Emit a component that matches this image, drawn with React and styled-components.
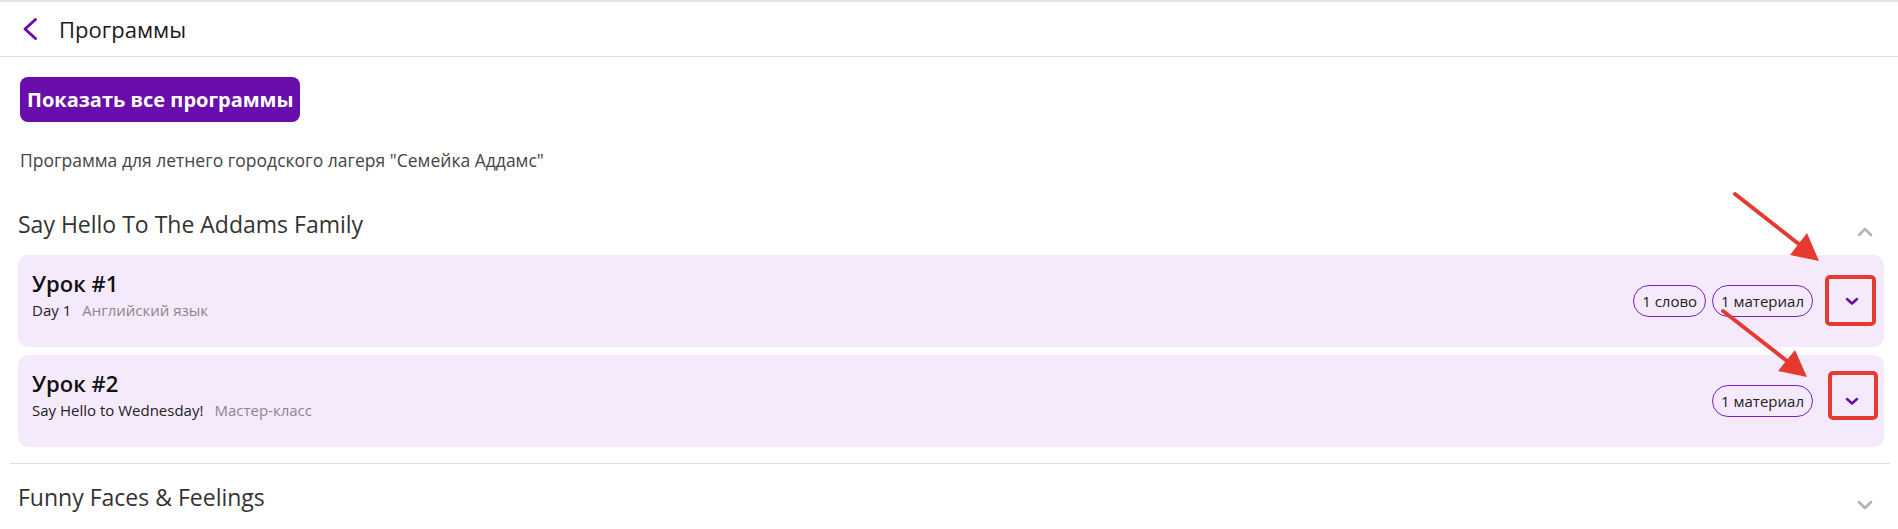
import React from 'react';
import styled, { createGlobalStyle } from 'styled-components';

const GlobalStyle = createGlobalStyle`
  html, body {
    margin: 0;
    padding: 0;
    background: #fff;
    font-family: "Open Sans", "Noto Sans", sans-serif;
  }
  * { box-sizing: border-box; }
`;

const lessonsA = [
  { title: 'Урок #1', name: 'Day 1', type: 'Английский язык', tags: ['1 слово', '1 материал'] },
  { title: 'Урок #2', name: 'Say Hello to Wednesday!', type: 'Мастер-класс', tags: ['1 материал'] },
];

function App() {
  return (
    <Page>
      <GlobalStyle />
      <Header>
        <BackIcon width="16" height="24" viewBox="0 0 16 24">
          <polyline points="13.5,2.5 3,12 13.5,21.5" />
        </BackIcon>
        <HeaderTitle>Программы</HeaderTitle>
      </Header>
      <Content>
        <ShowAllButton>Показать все программы</ShowAllButton>
        <Description>Программа для летнего городского лагеря "Семейка Аддамс"</Description>

        <Section>
          <SectionHead>
            <SectionTitle>Say Hello To The Addams Family</SectionTitle>
            <ToggleIcon width="16" height="10" viewBox="0 0 16 10">
              <polyline points="2,8 8,2 14,8" />
            </ToggleIcon>
          </SectionHead>
          <LessonList>
            {lessonsA.map((l) => (
              <LessonCard key={l.title}>
                <LessonInfo>
                  <LessonTitle>{l.title}</LessonTitle>
                  <Meta>
                    <MetaName>{l.name}</MetaName>
                    <MetaType>{l.type}</MetaType>
                  </Meta>
                </LessonInfo>
                <LessonSide>
                  {l.tags.map((t) => (
                    <Pill key={t}>{t}</Pill>
                  ))}
                  <ExpandButton>
                    <ExpandIcon width="14" height="9" viewBox="0 0 14 9">
                      <polyline points="2,2 7,6.5 12,2" />
                    </ExpandIcon>
                  </ExpandButton>
                </LessonSide>
              </LessonCard>
            ))}
          </LessonList>
        </Section>

        <Section>
          <SectionHead>
            <SectionTitle>Funny Faces &amp; Feelings</SectionTitle>
            <ToggleIcon width="16" height="10" viewBox="0 0 16 10">
              <polyline points="2,2 8,8 14,2" />
            </ToggleIcon>
          </SectionHead>
        </Section>
      </Content>

      <Annotations width="1898" height="529" viewBox="0 0 1898 529">
        <line x1="1735" y1="194" x2="1800" y2="245" />
        <polygon points="1819,261 1790,255 1807,233" />
        <line x1="1723" y1="311" x2="1787" y2="361" />
        <polygon points="1807,377 1778,371 1795,350" />
        <rect className="box" x="1827" y="277" width="47" height="47" rx="3" />
        <rect className="box" x="1830" y="373" width="46" height="45" rx="3" />
      </Annotations>
    </Page>
  );
}

const Page = styled.div`
  position: relative;
  width: 1898px;
  height: 529px;
  overflow: hidden;
`;

const Header = styled.header`
  display: flex;
  align-items: center;
  height: 57px;
  padding-left: 22px;
  border-top: 2px solid #e4e4e4;
  border-bottom: 1px solid #e7dbf2;
`;

const BackIcon = styled.svg`
  display: block;
  fill: none;
  stroke: #6a0dad;
  stroke-width: 3;
  stroke-linecap: round;
  stroke-linejoin: round;
`;

const HeaderTitle = styled.h1`
  margin: 0 0 0 21px;
  font-size: 22px;
  font-weight: 500;
  line-height: 28px;
  color: #1a1a1a;
`;

const Content = styled.main`
  padding: 20px 8px 0 10px;
`;

const ShowAllButton = styled.button`
  display: block;
  margin-left: 10px;
  padding: 9px 7px;
  border: none;
  border-radius: 8px;
  background: #6a0dad;
  color: #fff;
  font-family: inherit;
  font-size: 20px;
  font-weight: 700;
  line-height: 27px;
`;

const Description = styled.p`
  margin: 26px 0 19px 10px;
  font-size: 17.5px;
  line-height: 24px;
  color: #444;
`;

const Section = styled.section`
  padding: 17px 6px 16px 8px;
  border-bottom: 1px solid #e7dbf2;

  &:last-child {
    border-bottom: none;
  }
`;

const SectionHead = styled.div`
  display: flex;
  justify-content: space-between;
  align-items: flex-end;
`;

const SectionTitle = styled.h2`
  margin: 0;
  font-size: 23px;
  font-weight: 400;
  line-height: 32px;
  color: #333;
`;

const ToggleIcon = styled.svg`
  display: block;
  margin: 0 11px 3px 0;
  fill: none;
  stroke: #b3b3b3;
  stroke-width: 2.5;
  stroke-linecap: round;
  stroke-linejoin: round;
`;

const LessonList = styled.div`
  display: flex;
  flex-direction: column;
  gap: 8px;
  margin-top: 15px;
`;

const LessonCard = styled.div`
  display: flex;
  min-height: 92px;
  padding: 0 12px 0 14px;
  border-radius: 10px;
  background: #f5eafc;
`;

const LessonInfo = styled.div`
  flex: 1;
  padding-top: 14px;
`;

const LessonTitle = styled.div`
  font-size: 22px;
  font-weight: 600;
  line-height: 28px;
  color: #111;
`;

const Meta = styled.div`
  margin-top: 3px;
  font-size: 15px;
  line-height: 20px;
`;

const MetaName = styled.span`
  color: #222;
`;

const MetaType = styled.span`
  margin-left: 11px;
  color: #8a8590;
`;

const LessonSide = styled.div`
  display: flex;
  align-items: center;
  align-self: center;
  gap: 6px;
`;

const Pill = styled.span`
  height: 32px;
  padding: 0 8px;
  border: 1px solid #7a22c2;
  border-radius: 16px;
  font-size: 15px;
  line-height: 30px;
  color: #222;
`;

const ExpandButton = styled.button`
  display: flex;
  align-items: center;
  justify-content: center;
  width: 40px;
  height: 40px;
  margin-left: 13px;
  padding: 0;
  border: none;
  background: none;
`;

const ExpandIcon = styled.svg`
  display: block;
  fill: none;
  stroke: #6a0dad;
  stroke-width: 2.5;
  stroke-linecap: round;
  stroke-linejoin: round;
`;

const Annotations = styled.svg`
  position: absolute;
  top: 0;
  left: 0;
  pointer-events: none;

  line {
    stroke: #e53a30;
    stroke-width: 4;
    stroke-linecap: round;
  }
  polygon {
    fill: #e53a30;
  }
  .box {
    fill: none;
    stroke: #e53a30;
    stroke-width: 4;
  }
`;

export default App;
